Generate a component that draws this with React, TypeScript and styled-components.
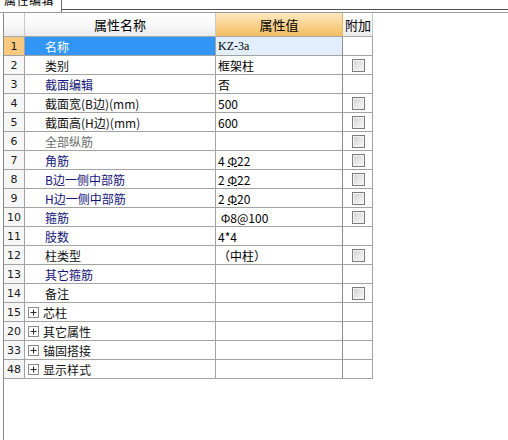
import React from "react";
import styled, { createGlobalStyle, css } from "styled-components";

const GlobalStyle = createGlobalStyle`
  html, body {
    margin: 0;
    padding: 0;
    background: #ffffff;
  }
  body {
    font-family: "Noto Sans CJK SC", "Liberation Sans", sans-serif;
    font-size: 12px;
    color: #000;
  }
`;

type Tone = "plain" | "blue" | "grey";

interface PropRow {
  no: string;
  name: string;
  value?: React.ReactNode;
  tone?: Tone;
  check?: boolean;
  group?: boolean;
  selected?: boolean;
}

const Panel = styled.div`
  width: 508px;
  height: 440px;
  overflow: hidden;
  display: flex;
  flex-direction: column;
  background: #fff;
`;

const TabStrip = styled.div`
  display: flex;
  height: 12px;
`;

const Tab = styled.div`
  width: 62px;
  height: 12px;
  box-sizing: border-box;
  border-right: 1px solid #6b6b6b;
  overflow: hidden;
  padding-left: 4px;
`;

const TabLabel = styled.span`
  display: block;
  font-size: 12px;
  line-height: 14px;
  margin-top: -7px;
  letter-spacing: 0.5px;
`;

const TabRest = styled.div`
  flex: 1;
  height: 9px;
  border-bottom: 1px solid #505050;
`;

const Divider = styled.div`
  height: 1px;
  background: #9c9c9c;
`;

const Body = styled.div`
  flex: 1;
  margin-left: 3px;
  border-left: 1px solid #8a8a8a;
`;

const Grid = styled.div`
  display: grid;
  grid-template-columns: 21px 191px 127px 30px;
  width: 369px;
`;

const cellBase = css`
  box-sizing: border-box;
  border-right: 1px solid #a3a3a3;
  border-bottom: 1px solid #a3a3a3;
  display: flex;
  align-items: center;
  white-space: nowrap;
  overflow: hidden;
`;

const HeaderCell = styled.div<{ $active?: boolean; $align?: "center" | "start" }>`
  ${cellBase};
  height: 24px;
  font-size: 13px;
  justify-content: ${(p) => (p.$align === "start" ? "flex-start" : "center")};
  padding-left: ${(p) => (p.$align === "start" ? "2px" : "0")};
  background: ${(p) =>
    p.$active
      ? "linear-gradient(#fde9bf, #f8d08a 55%, #f3bd63)"
      : "linear-gradient(#ffffff, #f7f7f7 60%, #ebebeb)"};
  border-right-color: ${(p) => (p.$active ? "#e9b562" : "#c9c9c9")};
  border-bottom-color: #a8a8a8;
`;

const NumCell = styled.div<{ $selected?: boolean }>`
  ${cellBase};
  height: 19px;
  justify-content: center;
  font-family: "DejaVu Sans", "Liberation Sans", sans-serif;
  font-size: 11px;
  color: #1a1a1a;
  background: ${(p) => (p.$selected ? "#f8c97e" : "#f6f6f6")};
`;

const toneColor: Record<Tone, string> = {
  plain: "#111111",
  blue: "#14147a",
  grey: "#6c6c6c",
};

const NameCell = styled.div<{ $selected?: boolean; $tone: Tone; $group?: boolean }>`
  ${cellBase};
  height: 19px;
  gap: 4px;
  padding-left: ${(p) => (p.$group ? "3px" : "20px")};
  color: ${(p) => (p.$selected ? "#ffffff" : toneColor[p.$tone])};
  background: ${(p) => (p.$selected ? "#3195f5" : "#ffffff")};
`;

const ValueCell = styled.div<{ $selected?: boolean }>`
  ${cellBase};
  height: 19px;
  padding-left: 2px;
  border-right-color: #8e8e8e;
  background: ${(p) => (p.$selected ? "#e2eefb" : "#ffffff")};
`;

const ExtraCell = styled.div`
  ${cellBase};
  height: 19px;
  justify-content: center;
  padding-left: 1px;
`;

const CheckBox = styled.span`
  width: 13px;
  height: 13px;
  box-sizing: border-box;
  border: 1px solid #7c7c7c;
  background: linear-gradient(135deg, #cfcfcf 0%, #e4e4e4 45%, #f8f8f8 100%);
  box-shadow: inset 0 0 0 1px #f4f4f4;
`;

// steel grade mark: Φ with a bar beneath it
const Rebar = styled.span`
  text-decoration: underline;
  text-underline-offset: 0px;
`;

const Mono = styled.span`
  font-family: "Liberation Serif", "Noto Sans CJK SC", serif;
  font-size: 12px;
`;

function PlusBox() {
  return (
    <svg width="11" height="11" viewBox="0 0 11 11" aria-hidden>
      <rect x="0.5" y="0.5" width="10" height="10" fill="#ffffff" stroke="#8a8a8a" />
      <path d="M2.5 5.5h6M5.5 2.5v6" stroke="#2a2a2a" strokeWidth="1" />
    </svg>
  );
}

const bars = (count: string, dia: string) => (
  <>
    {count}&nbsp;<Rebar>Φ</Rebar>
    {dia}
  </>
);

const rows: PropRow[] = [
  { no: "1", name: "名称", value: <Mono>KZ-3a</Mono>, selected: true },
  { no: "2", name: "类别", value: "框架柱", check: true },
  { no: "3", name: "截面编辑", value: "否", tone: "blue" },
  { no: "4", name: "截面宽(B边)(mm)", value: "500", check: true },
  { no: "5", name: "截面高(H边)(mm)", value: "600", check: true },
  { no: "6", name: "全部纵筋", tone: "grey", check: true },
  { no: "7", name: "角筋", value: bars("4", "22"), tone: "blue", check: true },
  { no: "8", name: "B边一侧中部筋", value: bars("2", "22"), tone: "blue", check: true },
  { no: "9", name: "H边一侧中部筋", value: bars("2", "20"), tone: "blue", check: true },
  { no: "10", name: "箍筋", value: <>&nbsp;Φ8@100</>, tone: "blue", check: true },
  { no: "11", name: "肢数", value: "4*4", tone: "blue" },
  { no: "12", name: "柱类型", value: "（中柱）", check: true },
  { no: "13", name: "其它箍筋", tone: "blue" },
  { no: "14", name: "备注", check: true },
  { no: "15", name: "芯柱", group: true },
  { no: "20", name: "其它属性", group: true },
  { no: "33", name: "锚固搭接", group: true },
  { no: "48", name: "显示样式", group: true },
];

export default function App() {
  return (
    <>
      <GlobalStyle />
      <Panel>
        <TabStrip>
          <Tab>
            <TabLabel>属性编辑</TabLabel>
          </Tab>
          <TabRest />
        </TabStrip>
        <Divider />
        <Body>
          <Grid>
            <HeaderCell />
            <HeaderCell>属性名称</HeaderCell>
            <HeaderCell $active>属性值</HeaderCell>
            <HeaderCell $align="start">附加</HeaderCell>
            {rows.map((r) => (
              <React.Fragment key={r.no}>
                <NumCell $selected={r.selected}>{r.no}</NumCell>
                <NameCell $selected={r.selected} $tone={r.tone ?? "plain"} $group={r.group}>
                  {r.group && <PlusBox />}
                  {r.name}
                </NameCell>
                <ValueCell $selected={r.selected}>{r.value}</ValueCell>
                <ExtraCell>{r.check && <CheckBox />}</ExtraCell>
              </React.Fragment>
            ))}
          </Grid>
        </Body>
      </Panel>
    </>
  );
}
